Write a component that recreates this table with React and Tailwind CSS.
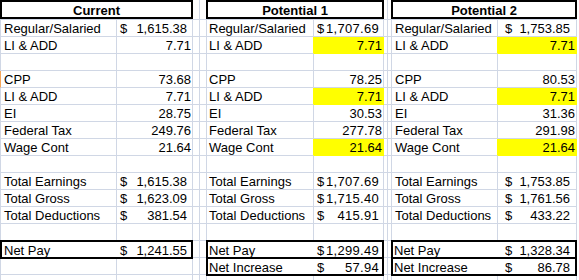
import React from "react";

const D = (n) => ({ d: true, n });
const P = (n) => ({ n });

const rows = [
  { label: "Regular/Salaried", v: [D("1,615.38"), D("1,707.69"), D("1,753.85")] },
  { label: "LI & ADD", v: [P("7.71"), P("7.71"), P("7.71")], hl: true },
  { label: "" },
  { label: "CPP", v: [P("73.68"), P("78.25"), P("80.53")], orange: true },
  { label: "LI & ADD", v: [P("7.71"), P("7.71"), P("7.71")], hl: true },
  { label: "EI", v: [P("28.75"), P("30.53"), P("31.36")] },
  { label: "Federal Tax", v: [P("249.76"), P("277.78"), P("291.98")] },
  { label: "Wage Cont", v: [P("21.64"), P("21.64"), P("21.64")], hl: true },
  { label: "" },
  { label: "Total Earnings", v: [D("1,615.38"), D("1,707.69"), D("1,753.85")] },
  { label: "Total Gross", v: [D("1,623.09"), D("1,715.40"), D("1,761.56")] },
  { label: "Total Deductions", v: [D("381.54"), D("415.91"), D("433.22")] },
];

const netPay = [D("1,241.55"), D("1,299.49"), D("1,328.34")];
const netInc = [null, D("57.94"), D("86.78")];

const sections = [
  {
    title: "Current",
    labelCell: "w-[117px]",
    valueCell: "w-[76px]",
    labelPl: "pl-[3px]",
    dPl: "pl-[3px]",
    nPr: "pr-[5px]",
    plainPr: "pr-[1px]",
    boxW: "w-[193px]",
    boxLabel: "w-[115px] pl-[2px]",
    boxNPr: "pr-[4px]",
    track: "",
  },
  {
    title: "Potential 1",
    labelCell: "w-[108px]",
    valueCell: "w-[70px]",
    labelPl: "pl-[2px]",
    dPl: "pl-[3px]",
    nPr: "pr-[4px]",
    plainPr: "pr-px",
    boxW: "w-[178px]",
    boxLabel: "w-[106px] pl-px",
    boxNPr: "pr-[3px]",
    track: "tracking-[0.3px]",
  },
  {
    title: "Potential 2",
    labelCell: "w-[107px]",
    valueCell: "w-[79px]",
    labelPl: "pl-[3px]",
    dPl: "pl-[7px]",
    nPr: "pr-[6px]",
    plainPr: "pr-[1px]",
    boxW: "w-[186px]",
    boxLabel: "w-[105px] pl-px",
    boxNPr: "pr-[5px]",
    track: "",
  },
];

function Val({ v, s, box }) {
  if (!v) return null;
  if (v.d) {
    return (
      <div className={`flex justify-between ${s.dPl} ${box ? s.boxNPr : s.nPr}`}>
        <span>$</span>
        <span className={s.track}>{v.n}</span>
      </div>
    );
  }
  return <div className={`text-right ${s.plainPr}`}>{v.n}</div>;
}

function DataRow({ s, si, row }) {
  const v = row.v ? row.v[si] : null;
  const hl = row.hl && si > 0;
  const left =
    row.orange && si === 0 ? "border-l-[#f5a65b]" : "border-l-[#d0d7e5]";
  const labelR = hl ? "border-r-[#ffff00]" : "border-r-[#d0d7e5]";
  return (
    <div className="flex h-[17px] shrink-0">
      <div
        className={`${s.labelCell} h-full border-l border-r border-b ${left} ${labelR} border-b-[#d0d7e5] ${s.labelPl} whitespace-nowrap overflow-hidden`}
      >
        {row.label}
      </div>
      <div
        className={`${s.valueCell} h-full border-r border-b ${
          hl ? "bg-[#ffff00] border-[#ffff00]" : "border-[#d0d7e5]"
        } whitespace-nowrap`}
      >
        <Val v={v} s={s} />
      </div>
    </div>
  );
}

function BlankRow({ s, h, bottom }) {
  return (
    <div className={`flex ${h} shrink-0`}>
      <div
        className={`${s.labelCell} h-full border-l border-r border-[#d0d7e5] ${
          bottom ? "border-b" : ""
        }`}
      />
      <div
        className={`${s.valueCell} h-full border-r border-[#d0d7e5] ${
          bottom ? "border-b" : ""
        }`}
      />
    </div>
  );
}

function Section({ s, si }) {
  return (
    <div className="flex flex-col shrink-0">
      <div className="h-[20px] border-b border-[#d0d7e5] shrink-0">
        <div
          className={`${s.boxW} h-[19px] border-2 border-black text-center font-bold`}
        >
          {s.title}
        </div>
      </div>
      {rows.map((row, i) => (
        <DataRow key={i} s={s} si={si} row={row} />
      ))}
      <BlankRow s={s} h="h-[16px]" />
      {si === 0 ? (
        <>
          <div className={`${s.boxW} h-[19px] border-2 border-black flex shrink-0`}>
            <div className={`${s.boxLabel} whitespace-nowrap`}>Net Pay</div>
            <div className="flex-1 whitespace-nowrap">
              <Val v={netPay[si]} s={s} box />
            </div>
          </div>
          <BlankRow s={s} h="h-[16px]" bottom />
          <BlankRow s={s} h="h-[17px]" bottom />
        </>
      ) : (
        <>
          <div
            className={`${s.boxW} h-[36px] border-2 border-black flex flex-col shrink-0`}
          >
            <div className="h-[17px] border-b-2 border-black flex shrink-0">
              <div className={`${s.boxLabel} whitespace-nowrap`}>Net Pay</div>
              <div className="flex-1 whitespace-nowrap">
                <Val v={netPay[si]} s={s} box />
              </div>
            </div>
            <div className="h-[15px] flex shrink-0">
              <div className={`${s.boxLabel} whitespace-nowrap`}>Net Increase</div>
              <div className="flex-1 whitespace-nowrap">
                <Val v={netInc[si]} s={s} box />
              </div>
            </div>
          </div>
          <BlankRow s={s} h="h-[17px]" bottom />
        </>
      )}
    </div>
  );
}

function GapCol({ w, right }) {
  const cells = Array.from({ length: 16 });
  return (
    <div className={`flex flex-col shrink-0 ${w}`}>
      <div
        className={`h-[20px] shrink-0 border-b border-[#d0d7e5] ${right ? "border-r" : ""}`}
      />
      {cells.map((_, i) => (
        <div
          key={i}
          className={`h-[17px] shrink-0 border-b border-[#d0d7e5] ${right ? "border-r" : ""}`}
        />
      ))}
    </div>
  );
}

export default function App() {
  return (
    <div
      className="w-[579px] h-[280px] overflow-hidden bg-white text-black text-[13px] leading-[17px] flex"
      style={{ fontFamily: '"Liberation Sans", Arial, sans-serif' }}
    >
      <Section s={sections[0]} si={0} />
      <GapCol w="w-[7px]" right />
      <GapCol w="w-[6px]" />
      <Section s={sections[1]} si={1} />
      <GapCol w="w-[4px]" right />
      <GapCol w="w-[3px]" />
      <Section s={sections[2]} si={2} />
    </div>
  );
}
